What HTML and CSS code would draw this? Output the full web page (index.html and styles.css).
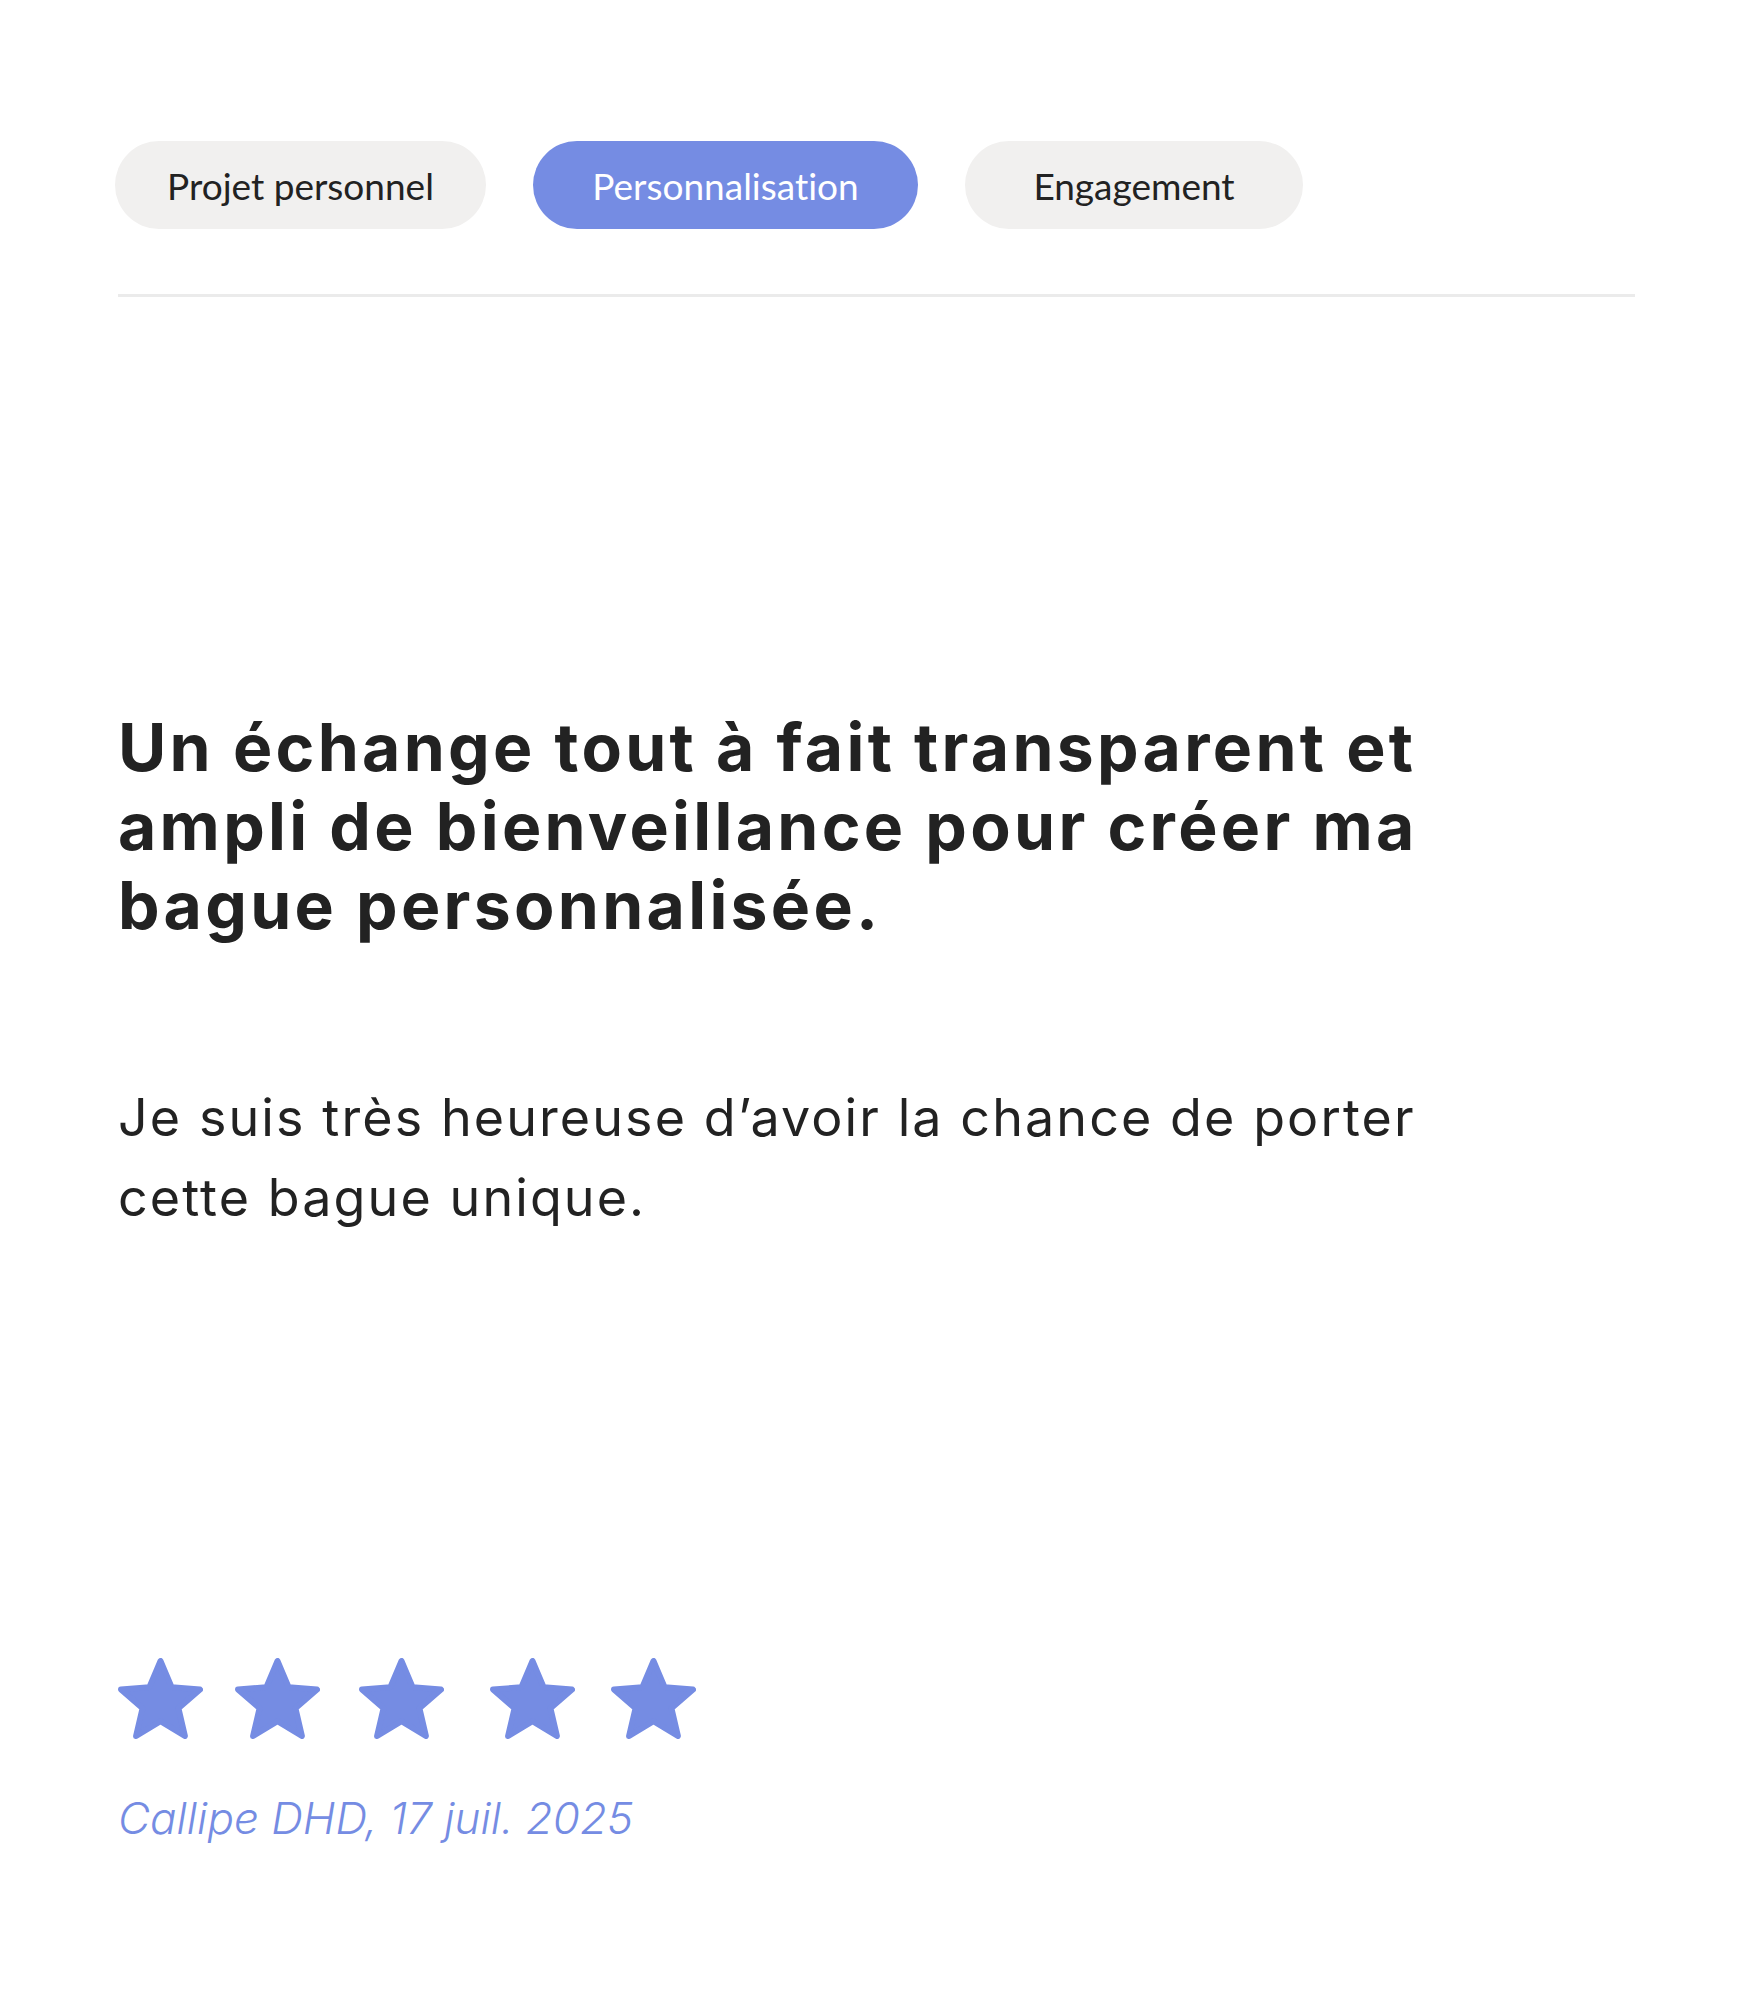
FILE: index.html
```html
<!doctype html>
<html lang="fr">
<head>
<meta charset="utf-8">
<title>Avis client</title>
<link rel="stylesheet" href="styles.css">
</head>
<body>
<div class="review">
	<ul class="tags">
		<li class="tag tag-projet">Projet personnel</li>
		<li class="tag tag-perso on">Personnalisation</li>
		<li class="tag tag-engage">Engagement</li>
	</ul>
	<div class="line"></div>

	<h2 class="title">Un échange tout à fait transparent et ampli de bienveillance pour créer ma bague personnalisée.</h2>
	<p class="text">Je suis très heureuse d’avoir la chance de porter cette bague unique.</p>

	<div class="stars">
		<svg viewBox="1.25 1.25 21.5 20.5" width="85" height="81"><path d="M12 17.27L18.18 21l-1.64-7.03L22 9.24l-7.19-.61L12 2 9.19 8.63 2 9.24l5.46 4.73L5.82 21z"/></svg>
		<svg viewBox="1.25 1.25 21.5 20.5" width="85" height="81"><path d="M12 17.27L18.18 21l-1.64-7.03L22 9.24l-7.19-.61L12 2 9.19 8.63 2 9.24l5.46 4.73L5.82 21z"/></svg>
		<svg viewBox="1.25 1.25 21.5 20.5" width="85" height="81"><path d="M12 17.27L18.18 21l-1.64-7.03L22 9.24l-7.19-.61L12 2 9.19 8.63 2 9.24l5.46 4.73L5.82 21z"/></svg>
		<svg viewBox="1.25 1.25 21.5 20.5" width="85" height="81"><path d="M12 17.27L18.18 21l-1.64-7.03L22 9.24l-7.19-.61L12 2 9.19 8.63 2 9.24l5.46 4.73L5.82 21z"/></svg>
		<svg viewBox="1.25 1.25 21.5 20.5" width="85" height="81"><path d="M12 17.27L18.18 21l-1.64-7.03L22 9.24l-7.19-.61L12 2 9.19 8.63 2 9.24l5.46 4.73L5.82 21z"/></svg>
	</div>
	<p class="author">Callipe DHD, 17 juil. 2025</p>
</div>
</body>
</html>
```

FILE: styles.css
```css
*{ margin:0; padding:0;}
body{ background:#fff; color:#222; font-family:Inter, "Noto Sans", sans-serif;}
.review{ width:1517px; padding:141px 0 120px 118px;}

.tags{ list-style:none; display:flex; gap:47px; margin-left:-3px;}
.tag{ height:88px; border-radius:44px; background:#f1f0ef; color:#222; font-family:Lato, sans-serif; font-size:37px; font-variant-ligatures:none; display:flex; align-items:center; justify-content:center;}
.tag.on{ background:#758ce3; color:#fff;}
.tag-projet{ width:371px;}
.tag-perso{ width:385px;}
.tag-engage{ width:338px;}

.line{ height:3px; background:#ebebeb; margin-top:65px;}

.title{ width:1330px; margin-top:411px; font-size:66px; line-height:79px; font-weight:700; letter-spacing:3.3px;}
.text{ width:1330px; margin-top:133px; font-size:52px; line-height:80px; font-weight:400; letter-spacing:2.1px;}

.stars{ display:flex; gap:32px; margin-top:420px;}
.stars svg{ display:block; fill:#758ce3; stroke:#758ce3; stroke-width:1.5; stroke-linejoin:round;}
.stars svg:nth-child(3){ margin-left:7px;}
.stars svg:nth-child(4){ margin-left:14px;}
.stars svg:nth-child(5){ margin-left:4px;}

.author{ margin-top:52px; font-size:44px; line-height:54px; font-style:italic; font-weight:300; color:#758ce3;}
```
